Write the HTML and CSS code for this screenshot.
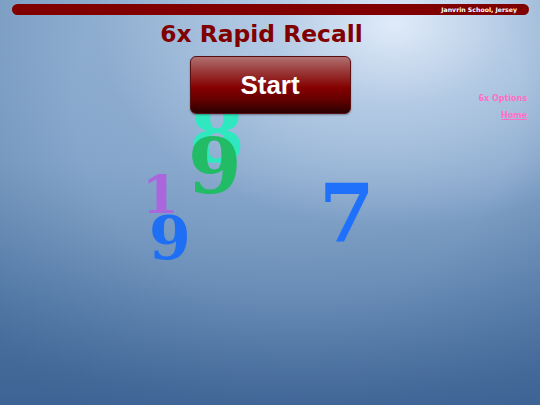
FILE: index.html
```html
<!DOCTYPE html>
<html>
<head>
<meta charset="utf-8">
<link rel="stylesheet" href="styles.css">
</head>
<body>
<div class="page">
  <div class="digits">
    <span class="digit d8">8</span>
    <span class="digit d9g">9</span>
    <span class="digit d1">1</span>
    <span class="digit d9b">9</span>
    <span class="digit d7">7</span>
  </div>
  <div class="topbar">Janvrin School, Jersey</div>
  <h1 class="title">6x Rapid Recall</h1>
  <div class="row">
    <div class="side"></div>
    <button class="start">Start</button>
    <nav class="links">
      <a class="link">6x Options</a>
      <a class="link home">Home</a>
    </nav>
  </div>
</div>
</body>
</html>
```

FILE: styles.css
```css
html, body {
  margin: 0;
  padding: 0;
}
.page {
  position: relative;
  width: 540px;
  height: 405px;
  overflow: hidden;
  padding-top: 4px;
  box-sizing: border-box;
  background:
    radial-gradient(ellipse 75% 90% at 55% 25%, rgba(40, 80, 130, 0) 55%, rgba(40, 80, 130, 0.28) 100%),
    radial-gradient(ellipse 55% 50% at 73% 6%, rgba(228, 238, 251, 0.95) 0%, rgba(205, 222, 242, 0.6) 40%, rgba(180, 204, 230, 0) 100%),
    radial-gradient(ellipse 90% 70% at 55% 30%, rgba(160, 188, 220, 0.5) 0%, rgba(160, 188, 220, 0) 100%),
    linear-gradient(#8aabcd 0%, #7b9dc4 40%, #5b81ad 72%, #466b9b 100%);
  font-family: "DejaVu Sans", Verdana, sans-serif;
}
.digits {
  position: absolute;
  inset: 0;
  z-index: 0;
}
.digit {
  position: absolute;
  font-family: "DejaVu Serif", serif;
  font-weight: bold;
  line-height: 1;
}
.d8 { left: 189px; top: 94px; font-size: 80px; color: #30e8c0; }
.d9g { left: 188px; top: 128px; font-size: 77px; color: #22bb66; }
.d1 { left: 142px; top: 168px; font-size: 53px; color: #aa66dd; }
.d9b { left: 149px; top: 208px; font-size: 60px; color: #1f6ff5; }
.d7 { left: 319px; top: 174px; font-size: 80px; color: #1f70fa; }
.topbar {
  position: relative;
  z-index: 1;
  margin: 0 11px 0 12px;
  height: 11px;
  border-radius: 6px;
  background: #800000;
  color: #ffffff;
  font-size: 6.2px;
  font-weight: bold;
  line-height: 11px;
  text-align: right;
  padding-right: 12px;
}
.title {
  position: relative;
  z-index: 1;
  margin: 5px 0 0;
  padding-right: 17px;
  text-align: center;
  font-size: 23.4px;
  line-height: 29px;
  font-weight: bold;
  color: #800000;
}
.row {
  position: relative;
  z-index: 1;
  display: grid;
  grid-template-columns: 1fr 161px 1fr;
  margin-top: 7px;
}
.start {
  width: 161px;
  height: 58px;
  padding: 0;
  border: 1px solid #5a1010;
  border-radius: 6px;
  background: linear-gradient(#b07070 0%, #9a3a3a 25%, #850000 55%, #600000 78%, #2a0000 100%);
  box-shadow: 0 1px 2px rgba(0, 0, 0, 0.35);
  color: #ffffff;
  font-family: "Liberation Sans", Arial, sans-serif;
  font-weight: bold;
  font-size: 26px;
}
.links {
  display: flex;
  flex-direction: column;
  align-items: flex-end;
  gap: 7px;
  padding: 38px 13px 0 0;
}
.link {
  color: #ff6fc8;
  font-size: 8px;
  font-weight: bold;
  line-height: 10px;
}
.home {
  text-decoration: underline;
}
```
